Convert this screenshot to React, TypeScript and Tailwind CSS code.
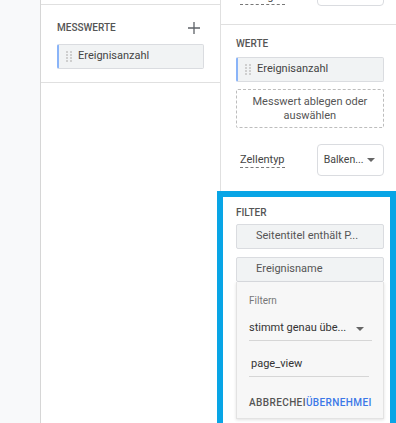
import React from "react";

function DragDots() {
  return (
    <svg width="6" height="12" viewBox="0 0 6 12" className="shrink-0">
      {[1, 4, 7, 10].map((y) => (
        <g key={y} fill="#cfcfcf">
          <rect x="0" y={y - 1} width="2" height="2" />
          <rect x="4" y={y - 1} width="2" height="2" />
        </g>
      ))}
    </svg>
  );
}

function Caret() {
  return (
    <svg width="8" height="4" viewBox="0 0 8 4" className="shrink-0">
      <path d="M0 0h8L4 4z" fill="#666" />
    </svg>
  );
}

function FieldChip({ label }: { label: string }) {
  return (
    <div className="flex h-[25px] items-center gap-[6px] rounded-[2px] border border-[#dadce0] border-l-2 border-l-[#8ab4f8] bg-[#f1f3f4] pl-[7px] text-[11px] text-[#444]">
      <DragDots />
      <span>{label}</span>
    </div>
  );
}

function FilterChip({ label }: { label: string }) {
  return (
    <div className="flex h-[25px] items-center rounded-[2px] border border-[#dadce0] bg-[#f1f3f4] pl-[19px] text-[11px] text-[#555]">
      {label}
    </div>
  );
}

function SectionLabel({ children }: { children: React.ReactNode }) {
  return <p className="h-[14px] text-[10px] leading-[14px] font-medium text-[#555]">{children}</p>;
}

export default function App() {
  return (
    <div className="relative flex h-[423px] w-[396px] overflow-hidden bg-white font-['Roboto',sans-serif]">
      <div className="w-[41px] shrink-0 border-r border-[#d6d6d6] bg-[#f8f9fa]" />

      <div className="w-[180px] shrink-0 border-r border-[#e0e0e0]">
        <div className="h-[5px] border-b border-[#e0e0e0]" />
        <section className="border-b border-[#e0e0e0] px-[16px] pt-[16px] pb-[13px]">
          <div className="flex items-center justify-between">
            <SectionLabel>MESSWERTE</SectionLabel>
            <svg width="12" height="12" viewBox="0 0 12 12" className="mr-[4px]">
              <path d="M6 0v12M0 6h12" stroke="#5f6368" strokeWidth="1.3" />
            </svg>
          </div>
          <div className="mt-[9px]">
            <FieldChip label="Ereignisanzahl" />
          </div>
        </section>
      </div>

      <div className="flex-1">
        <div className="flex h-[25px] items-start justify-between border-b border-[#e0e0e0] pl-[19px] pr-[13px]">
          <span className="-mt-[10px] border-b border-dashed border-[#777] text-[11px] leading-[14px] text-[#444]">Anzeigen</span>
          <div className="-mt-[26px] h-[32px] w-[67px] rounded-[4px] border border-[#dadce0]" />
        </div>

        <section className="pl-[15px] pr-[13px] pt-[12px]">
          <SectionLabel>WERTE</SectionLabel>
          <div className="mt-[6px]">
            <FieldChip label="Ereignisanzahl" />
          </div>
          <div className="mt-[7px] flex h-[39px] flex-col items-center justify-center rounded-[2px] border border-dashed border-[#bdbdbd] text-[11px] leading-[14px] text-[#555]">
            <span>Messwert ablegen oder</span>
            <span>auswählen</span>
          </div>
          <div className="mt-[16px] flex items-center justify-between pl-[4px]">
            <span className="border-b border-dashed border-[#777] text-[11px] leading-[14px] text-[#444]">Zellentyp</span>
            <div className="flex h-[32px] w-[67px] items-center justify-between rounded-[4px] border border-[#dadce0] pl-[6px] pr-[8px] text-[10.5px] text-[#444]">
              <span>Balken...</span>
              <Caret />
            </div>
          </div>
        </section>

        <section className="pl-[15px] pr-[13px] pt-[30px]">
          <SectionLabel>FILTER</SectionLabel>
          <div className="mt-[4px]">
            <FilterChip label="Seitentitel enthält P..." />
          </div>
          <div className="mt-[8px]">
            <FilterChip label="Ereignisname" />
          </div>
          <div className="h-[137px] border border-t-0 border-[#e3e3e3] bg-[#f7f7f7] pl-[12px] pr-[11px] pt-[12px] shadow-[0_1px_3px_rgba(0,0,0,0.12)]">
            <p className="text-[10px] leading-[14px] text-[#777]">Filtern</p>
            <div className="mt-[9px] flex h-[24px] items-center justify-between border-b border-[#d6d6d6] pr-[8px] text-[11px] text-[#333]">
              <span>stimmt genau übe...</span>
              <Caret />
            </div>
            <div className="mt-[12px] mr-[3px] flex h-[24px] items-center border-b border-[#d6d6d6] pl-[2px] text-[11px] text-[#333]">
              page_view
            </div>
            <div className="mt-[19px] flex text-[10px] font-medium leading-[14px] tracking-[0.4px]">
              <span className="text-[#555]">ABBRECHEI</span>
              <span className="text-[#3b78e7]">ÜBERNEHMEI</span>
            </div>
          </div>
        </section>
      </div>

      <div className="pointer-events-none absolute left-[217px] top-[191px] h-[240px] w-[179px] border-[6px] border-[#08a5e6]" />
    </div>
  );
}
